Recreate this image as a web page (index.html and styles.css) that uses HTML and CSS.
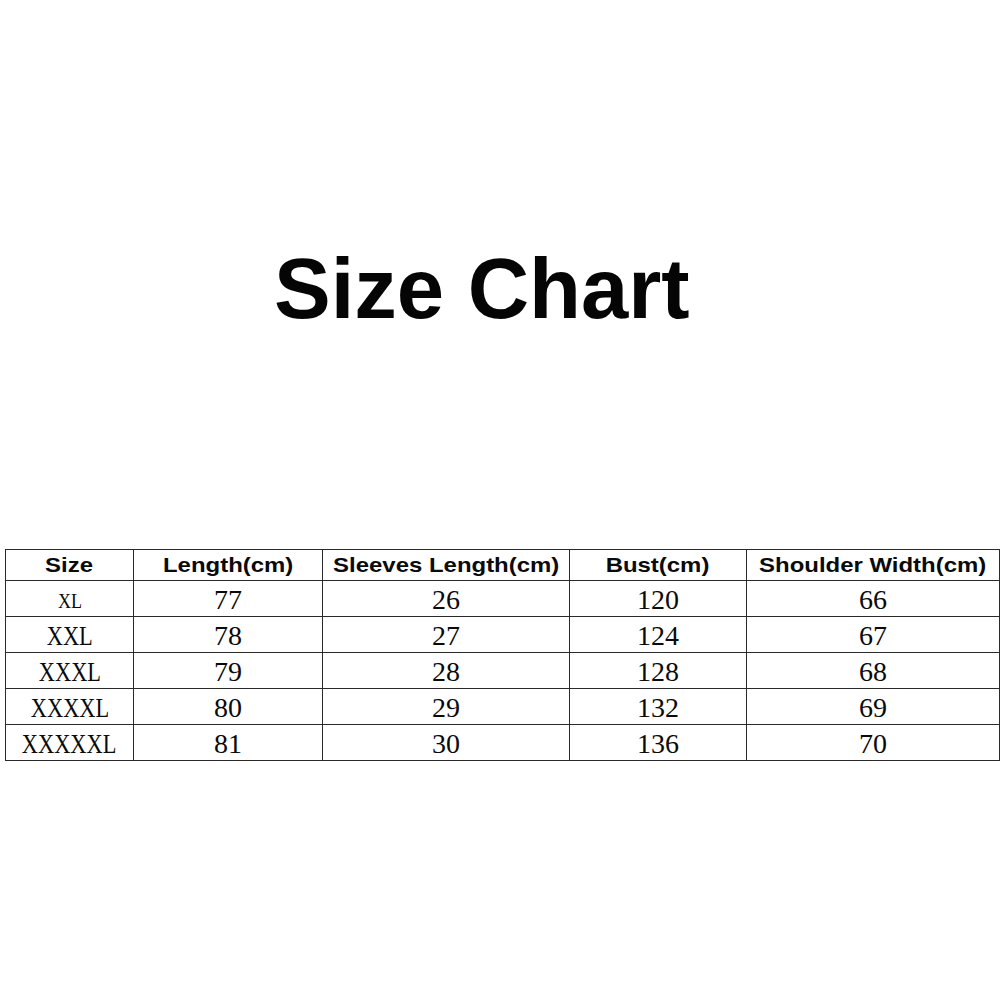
FILE: index.html
```html
<!DOCTYPE html>
<html>
<head>
<meta charset="utf-8">
<link rel="stylesheet" href="styles.css">
</head>
<body>
<h1 class="title">Size Chart</h1>
<table class="chart">
  <colgroup>
    <col class="c1"><col class="c2"><col class="c3"><col class="c4"><col class="c5">
  </colgroup>
  <thead>
    <tr class="head">
      <th><span class="hd">Size</span></th>
      <th><span class="hd">Length(cm)</span></th>
      <th><span class="hd">Sleeves Length(cm)</span></th>
      <th><span class="hd">Bust(cm)</span></th>
      <th><span class="hd">Shoulder Width(cm)</span></th>
    </tr>
  </thead>
  <tbody>
    <tr><td><span class="sz sz-small">XL</span></td><td>77</td><td>26</td><td>120</td><td>66</td></tr>
    <tr><td><span class="sz">XXL</span></td><td>78</td><td>27</td><td>124</td><td>67</td></tr>
    <tr><td><span class="sz">XXXL</span></td><td>79</td><td>28</td><td>128</td><td>68</td></tr>
    <tr><td><span class="sz">XXXXL</span></td><td>80</td><td>29</td><td>132</td><td>69</td></tr>
    <tr><td><span class="sz">XXXXXL</span></td><td>81</td><td>30</td><td>136</td><td>70</td></tr>
  </tbody>
</table>
</body>
</html>
```
FILE: styles.css
```css
html, body {
  margin: 0;
  padding: 0;
  background: #fff;
}
body {
  width: 1000px;
  height: 1000px;
  overflow: hidden;
  color: #0a0a0a;
}
.title {
  margin: 0;
  padding: 246px 0 0 274px;
  font-family: "Liberation Sans", Arial, sans-serif;
  font-weight: bold;
  font-size: 85px;
  line-height: 85px;
  height: 85px;
  color: #050505;
}
.chart {
  margin: 218px 0 0 5px;
  border-collapse: collapse;
  table-layout: fixed;
  width: 994px;
}
.c1 { width: 128px; }
.c2 { width: 189px; }
.c3 { width: 247px; }
.c4 { width: 177px; }
.c5 { width: 253px; }
.chart th, .chart td {
  border: 1px solid #2a2a2a;
  padding: 0;
  text-align: center;
  vertical-align: middle;
}
.chart th {
  height: 30px;
  font-family: "Liberation Sans", Arial, sans-serif;
  font-weight: bold;
  font-size: 21px;
  line-height: 22px;
  white-space: nowrap;
}
.hd {
  display: inline-block;
  transform: scaleX(1.14);
}
.chart td {
  height: 33px;
  padding-top: 2px;
  font-family: "Liberation Serif", "Times New Roman", serif;
  font-size: 28px;
  line-height: 30px;
}
.chart td:first-child {
  white-space: nowrap;
}
.sz {
  display: inline-block;
  transform: scaleX(0.8);
}
.sz-small {
  font-size: 21px;
  transform: scaleX(0.86);
}
```
